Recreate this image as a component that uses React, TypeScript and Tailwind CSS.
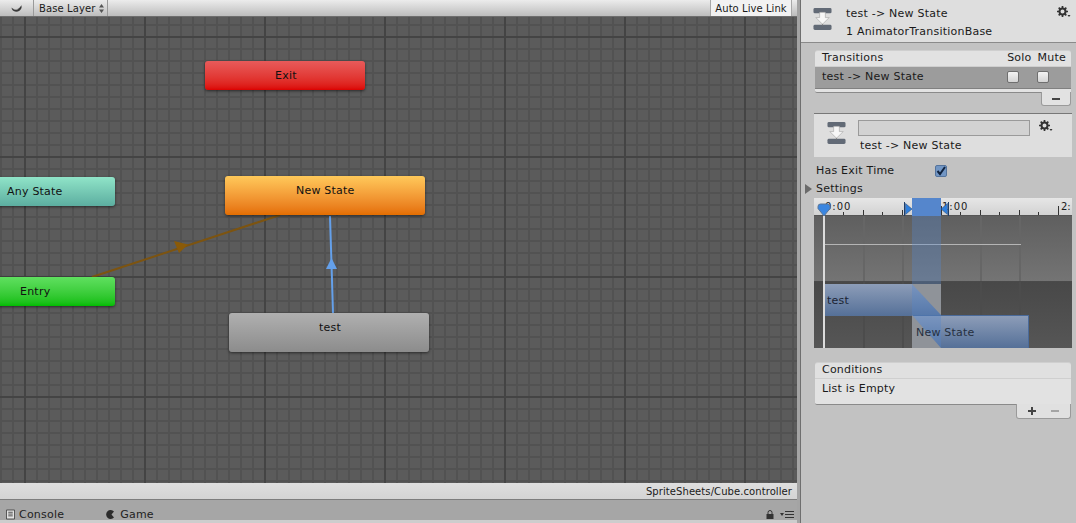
import React from 'react';

const GRID_CLASS =
  "[background-color:#5b5b5b] [background-image:linear-gradient(to_right,#444444_2px,transparent_2px),linear-gradient(to_bottom,#444444_2px,transparent_2px),linear-gradient(to_right,#525252_2px,transparent_2px),linear-gradient(to_bottom,#525252_2px,transparent_2px)] [background-size:120px_120px,120px_120px,12px_12px,12px_12px] [background-position:24px_19px,24px_19px,0px_7px,0px_7px]";

const TransitionIcon = ({ className }: { className: string }) => (
  <svg viewBox="0 0 20 24" className={className}>
    <rect x="0.500" y="0.500" width="19" height="5.500" rx="1.5" fill="#626a76" />
    <rect x="0.500" y="18" width="19" height="5.500" rx="1.5" fill="#626a76" />
    <path d="M10 16v3" stroke="#777" />
    <path d="M7 5h6v5.500h4l-7 7-7-7h4z" fill="#f7f7f7" stroke="#a0a0a0" strokeWidth="0.6" />
  </svg>
);

const Gear = ({ className }: { className: string }) => (
  <svg viewBox="0 0 14 12" className={className}>
    <g fill="none" stroke="#333">
      <circle cx="5.500" cy="5.500" r="3" strokeWidth="2" />
      <path d="M5.500 0v2M5.500 9v2M0 5.500h2M9 5.500h2M1.700 1.700l1.400 1.400M7.900 7.900l1.400 1.400M1.700 9.300l1.400-1.400M7.900 3.100l1.400-1.400" strokeWidth="1.700" />
    </g>
    <path d="M10.500 9h3l-1.500 2z" fill="#333" />
  </svg>
);

const StateNode = ({ label, className, textClass }: { label: string; className: string; textClass: string }) => (
  <div className={`absolute rounded-[3px] shadow-[0_1px_3px_rgba(0,0,0,0.55)] ${className}`}>
    <span className={`absolute whitespace-nowrap text-[11px] text-[#111] ${textClass}`}>{label}</span>
  </div>
);

const Checkbox = () => (
  <div className="w-[12px] h-[12px] mb-[2px] rounded-[2px] border border-[#6f6f6f] bg-gradient-to-b from-[#f4f4f4] to-[#d4d4d4]" />
);

const App: React.FC = () => {
  return (
    <div className="w-[1076px] h-[523px] flex overflow-hidden bg-[#c2c2c2] text-[11px] text-[#1a1a1a] tracking-[0.22px] font-['DejaVu_Sans',sans-serif]">
      {/* animator window */}
      <div className="w-[797px] h-[523px] flex flex-col shrink-0">
        <div className="h-[17px] shrink-0 flex bg-gradient-to-b from-[#ececec] to-[#bdbdbd] border-b border-[#6e6e6e]">
          <div className="w-[34px] flex items-center justify-center border-r border-[#9a9a9a]">
            <svg viewBox="0 0 12 7" className="w-[11px] h-[7px]">
              <path d="M0.500 2.500c2 2.500 6 2.500 8.500 0.500l2.500-3v3c-1 2.500-3 4-6 4s-4.500-1.500-5-4.500z" fill="#3a3a3a" />
              <path d="M2.500 3.800c2 1 4 1 5.500 0" stroke="#cfcfcf" fill="none" strokeWidth="0.700" />
            </svg>
          </div>
          <div className="w-[74px] flex items-center pl-[5px] border-r border-[#9a9a9a] text-[10px] tracking-[0.1px] whitespace-nowrap">
            Base Layer
            <svg viewBox="0 0 5 9" className="w-[5px] h-[9px] ml-[4px]">
              <path d="M2.500 0l2.500 3.500H0zM2.500 9L0 5.500h5z" fill="#555" />
            </svg>
          </div>
          <div className="flex-1" />
          <div className="w-[82px] flex items-center justify-center bg-[#f2f2f2] border-x border-[#a8a8a8] text-[10px] tracking-[0.06px] whitespace-nowrap">
            Auto Live Link
          </div>
          <div className="w-[5px]" />
        </div>

        <div className={`relative h-[466px] shrink-0 overflow-hidden ${GRID_CLASS}`}>
          <svg className="absolute inset-0 w-full h-full" viewBox="0 0 797 466">
            <line x1="92" y1="260" x2="280" y2="198" stroke="#7d5410" strokeWidth="2" />
            <path d="M188 227.500l-14-3.500 5 12z" fill="#8a5a08" />
            <line x1="333" y1="296" x2="330" y2="199" stroke="#64a0ea" strokeWidth="2" />
            <path d="M331.500 241l5.500 11h-11z" fill="#64a0ea" />
          </svg>
          <StateNode label="Exit" className="left-[205px] top-[44px] w-[160px] h-[29px] bg-gradient-to-b from-[#e85a5a] to-[#dc0000]" textClass="left-[70px] top-[7px]" />
          <StateNode label="Any State" className="left-[-10px] top-[160px] w-[125px] h-[29px] bg-gradient-to-b from-[#90e4c8] to-[#5caea0]" textClass="left-[17px] top-[7px]" />
          <StateNode label="New State" className="left-[225px] top-[159px] w-[200px] h-[39px] bg-gradient-to-b from-[#ffc95a] to-[#e46e00]" textClass="left-[71px] top-[7px]" />
          <StateNode label="Entry" className="left-[-10px] top-[260px] w-[125px] h-[29px] bg-gradient-to-b from-[#5fe05f] to-[#00bd00]" textClass="left-[30px] top-[7px]" />
          <StateNode label="test" className="left-[229px] top-[296px] w-[200px] h-[39px] bg-gradient-to-b from-[#b0b0b0] to-[#8c8c8c]" textClass="left-[90px] top-[7px]" />
        </div>

        <div className="h-[17px] shrink-0 flex items-center justify-end pr-[5px] bg-gradient-to-b from-[#dedede] to-[#d4d4d4] border-b border-[#7d7d7d] text-[10px] tracking-[0.08px]">
          SpriteSheets/Cube.controller
        </div>

        <div className="h-[23px] shrink-0 relative flex items-end bg-[#a6a6a6] text-[#222]">
          <div className="flex items-center h-[19px] mb-[-2px] pl-[6px]">
            <svg viewBox="0 0 10 11" className="w-[9px] h-[11px] mr-[4px] mb-[2px]">
              <path d="M0.500 0.500h9v10h-9z" fill="#e2e2e2" stroke="#444" />
              <path d="M2.500 3h5M2.500 5h5M2.500 7h5" stroke="#444" />
            </svg>
            <span>Console</span>
          </div>
          <div className="flex items-center h-[19px] mb-[-2px] ml-[42px]">
            <svg viewBox="0 0 9 9" className="w-[9px] h-[9px] mr-[5px] mb-[3px]">
              <path d="M8 1.500A4.500 4.500 0 1 0 8 7.500L5.500 4.500z" fill="#2c2c2c" />
            </svg>
            <span>Game</span>
          </div>
          <div className="ml-auto flex items-center gap-[6px] pr-[3px] h-[12px] mb-[3px]">
            <svg viewBox="0 0 8 9" className="w-[8px] h-[9px]">
              <path d="M2 4V2.500a2 2 0 0 1 4 0V4" fill="none" stroke="#333" />
              <rect x="0.500" y="4" width="7" height="5" fill="#333" />
            </svg>
            <svg viewBox="0 0 14 7" className="w-[14px] h-[7px]">
              <path d="M0 2h4L2 5z" fill="#333" />
              <path d="M5 .5h9M5 3.500h9M5 6.500h9" stroke="#333" />
            </svg>
          </div>
          <div className="absolute left-0 right-0 bottom-0 h-[3px] bg-[#cdcdcd]" />
        </div>
      </div>

      <div className="w-[3px] bg-[#a4a4a4]" />
      <div className="w-px bg-[#6f6f6f]" />

      {/* inspector */}
      <div className="flex-1 flex flex-col">
        <div className="h-[43px] shrink-0 flex bg-[#dedede] border-b border-[#8a8a8a] relative">
          <TransitionIcon className="w-[19px] h-[24px] ml-[12px] mt-[7px]" />
          <div className="ml-[14px] pt-[5px] leading-[18px]">
            <div>test -&gt; New State</div>
            <div>1 AnimatorTransitionBase</div>
          </div>
          <Gear className="absolute right-[5px] top-[6px] w-[14px] h-[12px]" />
        </div>

        <div className="mt-[7px] ml-[14px] mr-[5px]">
          <div className="rounded-t-[3px] bg-[#e2e2e2] border-t border-[#cfcfcf] h-[17px] flex items-center justify-between pl-[7px] pr-[5px] border-b border-[#a0a0a0]">
            <span>Transitions</span>
            <span className="flex gap-[6px]"><span>Solo</span><span>Mute</span></span>
          </div>
          <div className="h-[22px] bg-[#9c9c9c] border-b border-[#808080] flex items-center pl-[7px] pr-[22px]">
            <span className="flex-1">test -&gt; New State</span>
            <Checkbox />
            <div className="w-[18px]" />
            <Checkbox />
          </div>
          <div className="h-[4px] bg-[#e2e2e2] border-b border-[#8a8a8a] rounded-bl-[2px]" />
          <div className="ml-auto w-[30px] h-[14px] -mt-px bg-[#e2e2e2] border-b border-x border-[#9a9a9a] rounded-b-[3px] flex items-center justify-center">
            <div className="w-[8px] h-[2px] bg-[#444]" />
          </div>
        </div>

        <div className="mt-[7px] ml-[13px] mr-[4px] h-[44px] bg-[#dedede] border-t border-[#777] flex relative">
          <TransitionIcon className="w-[19px] h-[24px] ml-[13px] mt-[7px]" />
          <div className="ml-[12px] pt-[6px] flex flex-col">
            <div className="w-[172px] h-[16px] bg-[#d2d2d2] border border-[#9a9a9a]" />
            <div className="mt-[2px] ml-[2px]">test -&gt; New State</div>
          </div>
          <Gear className="ml-[9px] mt-[6px] w-[14px] h-[12px]" />
        </div>

        <div className="mt-[5px] h-[18px] flex items-center pl-[15px]">
          <span className="w-[119px]">Has Exit Time</span>
          <div className="w-[12px] h-[12px] rounded-[2px] bg-[#7296c4] border border-[#54739c] flex items-center justify-center">
            <svg viewBox="0 0 10 10" className="w-[10px] h-[10px]">
              <path d="M1.500 5l2.500 3L9 1" fill="none" stroke="#10233f" strokeWidth="2" />
            </svg>
          </div>
        </div>
        <div className="h-[18px] flex items-center pl-[4px]">
          <div className="w-0 h-0 border-y-[5px] border-y-transparent border-l-[7px] border-l-[#6b6b6b] mr-[4px]" />
          <span>Settings</span>
        </div>

        {/* transition timeline */}
        <div className="relative ml-[13px] mr-[4px] h-[150px] shrink-0 overflow-hidden">
          <div className="h-[18px] bg-gradient-to-b from-[#e6e6e6] to-[#d2d2d2] border-b border-[#555] relative">
            <span className="absolute left-[11px] top-[1px] text-[10px] tracking-[1px]">0:00</span>
            <span className="absolute left-[128px] top-[1px] text-[10px] tracking-[1px]">1:00</span>
            <span className="absolute left-[247px] top-[1px] text-[10px] tracking-normal">2:</span>
            {[10, 49, 88, 127, 166, 205, 244].map((x, i) => (
              <div key={x} className="absolute bottom-0 w-px h-[5px] bg-[#333]" style={{ left: x }}>
                {i % 3 === 0 ? <div className="w-px h-[9px] -mt-[4px] bg-[#333]" /> : null}
              </div>
            ))}
            {[29, 68, 107, 146, 185, 224].map((x) => (
              <div key={x} className="absolute bottom-0 w-px h-[3px] bg-[#333]" style={{ left: x }} />
            ))}
          </div>
          <div className="h-[66px] bg-gradient-to-b from-[#5f5f5f] to-[#747474] border-b border-[#4a4a4a] relative">
            {[49, 88, 166, 205].map((x) => (
              <div key={x} className="absolute top-0 bottom-0 w-[2px] bg-[#666]" style={{ left: x }} />
            ))}
            <div className="absolute left-[10px] top-[28px] w-[197px] h-px bg-[#b5b5b5]" />
          </div>
          <div className="h-[66px] bg-gradient-to-b from-[#484848] to-[#565656] relative">
            {[49, 88, 166, 205].map((x) => (
              <div key={x} className="absolute top-0 bottom-0 w-[2px] bg-[#4c4c4c]" style={{ left: x }} />
            ))}
            <div className="absolute left-[10px] top-[2px] w-[117px] h-[32px] bg-gradient-to-b from-[#8d9db8] to-[#557098] border-r border-[#4a6a9a]" />
            <div className="absolute left-[98px] top-[33px] w-[117px] h-[33px] bg-gradient-to-b from-[#8d9db8] to-[#557098] border-x border-t border-[#4a6a9a]" />
          </div>
          {/* selected transition band */}
          <div className="absolute left-[98px] top-[18px] w-[29px] h-[132px] bg-[#5588cc]/35" />
          <div className="absolute left-[98px] top-0 w-[29px] h-[18px] bg-[#5586cc]" />
          <svg viewBox="0 0 29 66" className="absolute left-[98px] top-[84px] w-[29px] h-[66px]">
            <path d="M0 2h29v31z" fill="#8f9399" />
            <path d="M0 33l29 33H0z" fill="#8f9399" />
          </svg>
          <span className="absolute left-[13px] top-[95px] text-[#1b2433]">test</span>
          <span className="absolute left-[102px] top-[127px] text-[#26303f]">New State</span>
          <svg viewBox="0 0 8 14" className="absolute left-[90px] top-[4px] w-[8px] h-[14px]">
            <path d="M0 0h1v14H0z" fill="#1e3f6c" />
            <path d="M1.500 1.500L8 7l-6.500 5.500z" fill="#2f7fdc" stroke="#1e3f6c" strokeWidth="0.500" />
          </svg>
          <svg viewBox="0 0 8 14" className="absolute left-[127px] top-[4px] w-[8px] h-[14px]">
            <path d="M7 0h1v14H7z" fill="#1e3f6c" />
            <path d="M6.500 1.500L0 7l6.500 5.500z" fill="#2f7fdc" stroke="#1e3f6c" strokeWidth="0.500" />
          </svg>
          <div className="absolute left-[9px] top-[18px] bottom-0 w-[2px] bg-[#dcdcdc]" />
          <svg viewBox="0 0 14 14" className="absolute left-[3px] top-[5px] w-[14px] h-[14px]">
            <path d="M1 3.500Q1 1 3.500 1h7Q13 1 13 3.500v2L7 13 1 5.500z" fill="#3b86e0" stroke="#5a7698" />
          </svg>
        </div>

        <div className="mt-[14px] ml-[14px] mr-[5px]">
          <div className="rounded-t-[3px] bg-[#e0e0e0] border-t border-[#cfcfcf] h-[17px] flex items-center pl-[7px] border-b border-[#a0a0a0]">Conditions</div>
          <div className="h-[26px] bg-[#e2e2e2] border-b border-[#8a8a8a] pl-[7px] pt-[2px] rounded-bl-[2px]">List is Empty</div>
          <div className="ml-auto w-[55px] h-[15px] -mt-px bg-[#e0e0e0] border-b border-x border-[#9a9a9a] rounded-b-[3px] flex items-center pl-[11px] gap-[15px]">
            <span className="relative w-[8px] h-[8px]">
              <span className="absolute left-0 top-[3px] w-[8px] h-[2px] bg-[#444]" />
              <span className="absolute left-[3px] top-0 w-[2px] h-[8px] bg-[#444]" />
            </span>
            <span className="w-[8px] h-[2px] bg-[#a4a4a4]" />
          </div>
        </div>
      </div>
    </div>
  );
};

export default App;
